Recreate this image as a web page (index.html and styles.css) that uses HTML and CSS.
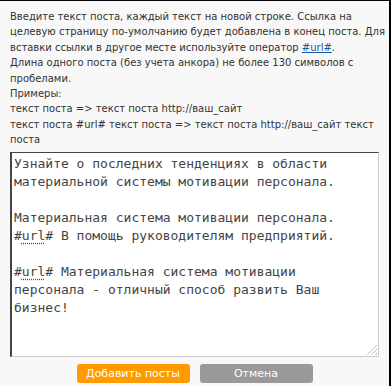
FILE: index.html
```html
<!DOCTYPE html>
<html lang="ru">
<head>
    <meta charset="UTF-8">
    <title>Добавить посты</title>
    <link rel="stylesheet" href="styles.css">
</head>
<body>

    <div class="dialog">
        <p class="hint">
            Введите текст поста, каждый текст на новой строке. Ссылка на целевую страницу по-умолчанию будет добавлена в конец поста. Для вставки ссылки в другое месте используйте оператор <a href="#">#url#</a>.<br>
            Длина одного поста (без учета анкора) не более 130 символов с пробелами.<br>
            Примеры:<br>
            текст поста =&gt; текст поста http://ваш_сайт<br>
            текст поста #url# текст поста =&gt; текст поста http://ваш_сайт текст поста
        </p>

        <div class="posts">Узнайте о последних тенденциях в области материальной системы мотивации персонала.

Материальная система мотивации персонала. #<span class="typo">url</span># В помощь руководителям предприятий.

#<span class="typo">url</span># Материальная система мотивации персонала - отличный способ развить Ваш бизнес!
<span class="grip"></span></div>

        <div class="buttons">
            <button class="btn btn-add">Добавить посты</button>
            <button class="btn btn-cancel">Отмена</button>
        </div>
    </div>

</body>
</html>
```

FILE: styles.css
```css
* {
    margin: 0;
    padding: 0;
    box-sizing: border-box;
}

body {
    background-color: #000;
    font-family: Tahoma, "DejaVu Sans", sans-serif;
}

.dialog {
    background: #f8f8f8;
    margin: 1px 2px 0 0;
    height: 385px;
    padding: 8px 10px 0 10px;
}

.hint {
    font-size: 10px;
    line-height: 15.4px;
    color: #333;
    margin-right: -8px;
}

.hint a {
    color: #1a55a8;
}

.posts {
    position: relative;
    margin-top: 4px;
    height: 205px;
    padding: 2px 10px 2px 2px;
    background: #fff;
    border: 1px solid #ccc;
    border-top-color: #444;
    border-left: 2px solid #444;
    font-family: "DejaVu Sans Mono", monospace;
    font-size: 13px;
    line-height: 18px;
    color: #444;
    white-space: pre-wrap;
}

.typo {
    text-decoration: underline dotted #e00;
    text-underline-offset: 3px;
}

.grip {
    position: absolute;
    right: 1px;
    bottom: 1px;
    width: 11px;
    height: 11px;
    background: repeating-linear-gradient(135deg, transparent 0 2px, #bbb 2px 3px);
    clip-path: polygon(100% 0, 100% 100%, 0 100%);
}

.buttons {
    display: flex;
    justify-content: center;
    gap: 10px;
    margin-top: 7px;
}

.btn {
    width: 113px;
    height: 19px;
    border: none;
    border-radius: 3px;
    color: #fff;
    font-family: Tahoma, "DejaVu Sans", sans-serif;
    font-size: 11px;
}

.btn-add {
    background: #ff9a00;
}

.btn-cancel {
    background: #999;
}
```
